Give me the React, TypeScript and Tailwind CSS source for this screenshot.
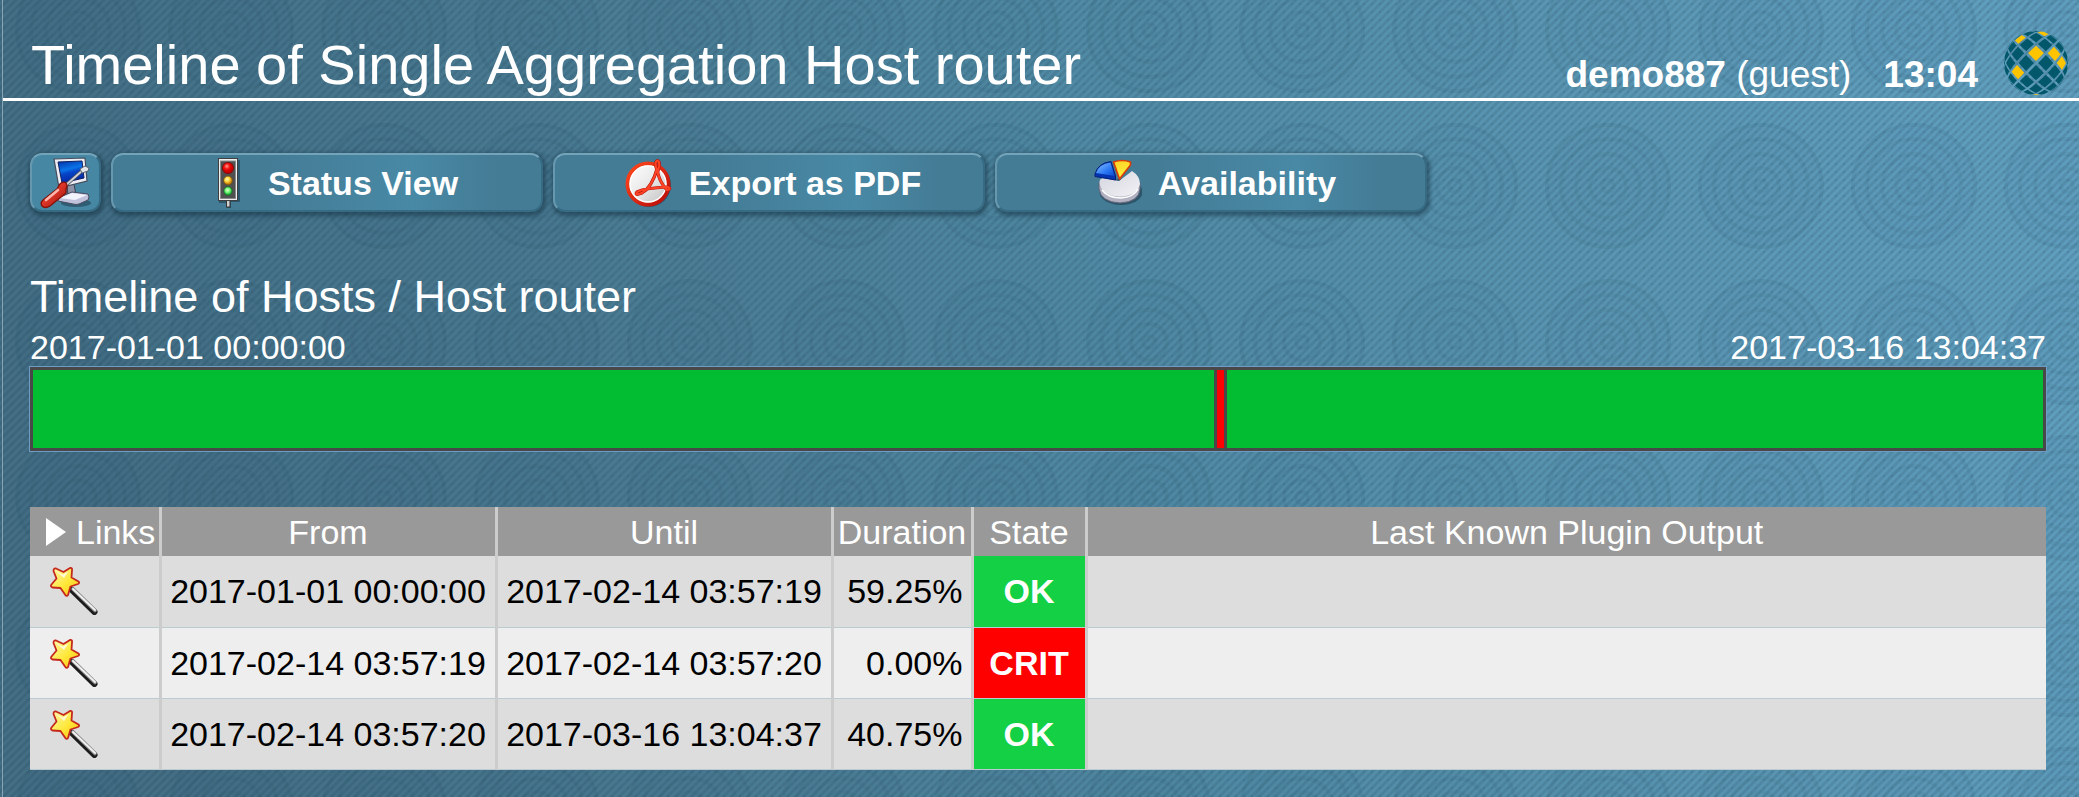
import React from "react";

type State = "OK" | "CRIT";

interface Entry {
  from: string;
  until: string;
  duration: string;
  state: State;
  output: string;
}

const entries: Entry[] = [
  { from: "2017-01-01 00:00:00", until: "2017-02-14 03:57:19", duration: "59.25%", state: "OK", output: "" },
  { from: "2017-02-14 03:57:19", until: "2017-02-14 03:57:20", duration: "0.00%", state: "CRIT", output: "" },
  { from: "2017-02-14 03:57:20", until: "2017-03-16 13:04:37", duration: "40.75%", state: "OK", output: "" },
];

const stateColors: Record<State, string> = {
  OK: "bg-[#13d044]",
  CRIT: "bg-[#ff0000]",
};

function Backdrop() {
  return (
    <svg className="absolute inset-0 h-full w-full" aria-hidden="true">
      <defs>
        <linearGradient id="base" x1="0" y1="0.1" x2="1" y2="0">
          <stop offset="0" stopColor="#436e84" />
          <stop offset="0.25" stopColor="#497a91" />
          <stop offset="0.5" stopColor="#5089a3" />
          <stop offset="0.75" stopColor="#5a96b2" />
          <stop offset="1" stopColor="#61a0c0" />
        </linearGradient>
        <pattern id="twill" width="8" height="8" patternUnits="userSpaceOnUse">
          <path d="M-2 2 L2 -2 M-2 10 L10 -2 M6 10 L10 6" stroke="#12384e" strokeOpacity="0.14" strokeWidth="2.8" />
          <circle cx="4" cy="4" r="1" fill="#12384e" fillOpacity="0.14" />
        </pattern>
        <pattern id="rings" x="2" y="110" width="153" height="156" patternUnits="userSpaceOnUse">
          <g fill="none" stroke="#123448" strokeOpacity="0.06" strokeWidth="4">
            <circle cx="76" cy="76" r="6" />
            <circle cx="76" cy="76" r="18" />
            <circle cx="76" cy="76" r="32" />
            <circle cx="76" cy="76" r="47" />
            <circle cx="76" cy="76" r="61" />
          </g>
          <circle cx="76" cy="76" r="63" fill="#123448" fillOpacity="0.025" />
        </pattern>
      </defs>
      <rect width="100%" height="100%" fill="url(#base)" />
      <rect width="100%" height="100%" fill="url(#rings)" />
      <rect width="100%" height="100%" fill="url(#twill)" />
    </svg>
  );
}

const GLOBE_STEP = 0.318;
const goldCells = new Set(["0,-1", "-2,1", "2,-1", "3,0", "-2,-3", "1,-4", "0,5"]);

function project(i: number, j: number): string {
  const r = Math.hypot(i, j);
  if (r === 0) return "0,0";
  const d = Math.sin(Math.min(r * GLOBE_STEP, Math.PI / 2)) * 32;
  return `${((i / r) * d).toFixed(2)},${((j / r) * d).toFixed(2)}`;
}

function GlobeLogo() {
  const cells: React.ReactNode[] = [];
  const half = 0.8;
  for (let i = -5; i <= 5; i++) {
    for (let j = -5; j <= 5; j++) {
      if ((i + j) % 2 === 0 || Math.hypot(i, j) > 5.3) continue;
      const corners = [[half, 0], [0, half], [-half, 0], [0, -half]];
      const points: string[] = [];
      corners.forEach(([x, y], n) => {
        const [nx, ny] = corners[(n + 1) % 4];
        for (let t = 0; t < 4; t++) {
          points.push(project(i + x + ((nx - x) * t) / 4, j + y + ((ny - y) * t) / 4));
        }
      });
      const key = `${i},${j}`;
      cells.push(<polygon key={key} points={points.join(" ")} fill={goldCells.has(key) ? "#ffc400" : "#02586a"} />);
    }
  }
  return (
    <svg viewBox="-32 -32 64 64" className="size-16" role="img" aria-label="Logo">
      {cells}
    </svg>
  );
}

function ToolsIcon() {
  return (
    <svg viewBox="0 0 52 52" className="size-13" aria-hidden="true">
      <defs>
        <linearGradient id="screen" x1="0" y1="0" x2="0.3" y2="1">
          <stop offset="0" stopColor="#0430a8" />
          <stop offset="0.45" stopColor="#0a74e8" />
          <stop offset="0.6" stopColor="#0646c8" />
          <stop offset="1" stopColor="#0326a4" />
        </linearGradient>
        <linearGradient id="grip" x1="0" y1="0" x2="1" y2="1">
          <stop offset="0" stopColor="#ffa092" />
          <stop offset="0.4" stopColor="#e23a2c" />
          <stop offset="1" stopColor="#9c0e08" />
        </linearGradient>
      </defs>
      <ellipse cx="36" cy="46" rx="15" ry="4" fill="#1d3b4c" fillOpacity="0.55" />
      <path d="M27 28 L34 27 L36 38 L28 38 Z" fill="#8f93a8" stroke="#3c4252" />
      <path d="M18 41 L32 35 L48 37 Q50 40 48 43 L39 47 Q36 48 33 47 L18 44 Z" fill="#c0c2dc" stroke="#474c60" />
      <path d="M20 41 L32 36 L47 38 L35 43 Z" fill="#f3f3fc" />
      <path d="M14 2 L45 1 L47 24 L19 31 Z" fill="#ececf4" stroke="#474c5c" strokeWidth="1.2" />
      <path d="M18 5 L42 4 L44 21 L22 26 Z" fill="url(#screen)" stroke="#10205c" />
      <path d="M26 28 L43 13" stroke="#4b4f58" strokeWidth="3.6" strokeLinecap="round" />
      <path d="M26 28 L43 13" stroke="#c9cdd6" strokeWidth="2" strokeLinecap="round" />
      <path d="M40 12 L45 9 L49 11 L48 14 L42 16 Z" fill="#dfe3ea" stroke="#5c626e" />
      <path d="M20 27 Q23 24 26 26 Q28 29 26 32 L26 36 L10 49 Q5 52 2 49 Q0 46 3 43 L17 32 Z" fill="url(#grip)" stroke="#861008" strokeWidth="1.3" />
      <path d="M6 43 L18 33" stroke="#ffc4ba" strokeWidth="2.6" strokeLinecap="round" strokeOpacity="0.9" />
    </svg>
  );
}

function TrafficLightIcon() {
  return (
    <svg viewBox="0 0 48 50" className="h-[50px] w-12" aria-hidden="true">
      <defs>
        <radialGradient id="lampRed" cx="0.4" cy="0.35">
          <stop offset="0" stopColor="#ff9d8c" /><stop offset="0.5" stopColor="#f31111" /><stop offset="1" stopColor="#c40000" />
        </radialGradient>
        <radialGradient id="lampYellow" cx="0.4" cy="0.35">
          <stop offset="0" stopColor="#fff8b0" /><stop offset="0.6" stopColor="#f8d23a" /><stop offset="1" stopColor="#cf8a10" />
        </radialGradient>
        <radialGradient id="lampGreen" cx="0.45" cy="0.4">
          <stop offset="0" stopColor="#d8ffd0" /><stop offset="0.6" stopColor="#6ef272" /><stop offset="1" stopColor="#22b63a" />
        </radialGradient>
      </defs>
      <path d="M15 2 H36 V44 H27 V50 H23 V45 H15 Z" fill="#102c3a" fillOpacity="0.45" />
      <rect x="22.5" y="42" width="3.5" height="7" fill="#d0d0d0" stroke="#333" strokeWidth="1" />
      <rect x="14.5" y="0.5" width="19" height="42" fill="#efefef" stroke="#3f3f3f" />
      <rect x="16.5" y="3" width="15" height="37.5" fill="#505050" stroke="#8b8b8b" />
      <circle cx="24" cy="10" r="5.6" fill="url(#lampRed)" stroke="#7c0808" strokeWidth="0.8" />
      <circle cx="24" cy="22.5" r="4.4" fill="url(#lampYellow)" stroke="#6e4d0c" strokeWidth="0.8" />
      <circle cx="24" cy="33" r="4.2" fill="url(#lampGreen)" stroke="#176a24" strokeWidth="0.8" />
    </svg>
  );
}

function PdfIcon() {
  return (
    <svg viewBox="0 0 48 50" className="h-[50px] w-12" aria-hidden="true">
      <defs>
        <linearGradient id="disc" x1="0" y1="0" x2="1" y2="1">
          <stop offset="0" stopColor="#ffffff" /><stop offset="0.5" stopColor="#e9e9e9" /><stop offset="1" stopColor="#bdbdbd" />
        </linearGradient>
        <linearGradient id="rim" x1="0" y1="0" x2="1" y2="1">
          <stop offset="0" stopColor="#ff4a1c" /><stop offset="1" stopColor="#b80a0a" />
        </linearGradient>
      </defs>
      <circle cx="24" cy="27" r="22" fill="#14303e" fillOpacity="0.5" />
      <circle cx="23" cy="26" r="20.5" fill="url(#disc)" stroke="url(#rim)" strokeWidth="4" />
      <circle cx="23" cy="26" r="18" fill="none" stroke="#fff" strokeWidth="1.4" />
      <g fill="none" strokeLinecap="round" strokeLinejoin="round">
        <path d="M34 4 Q32 1 30.5 5 Q30 9 33 13 Q35 8 34 4 M32 11 Q27 29 17 35 Q9 38 12 34 Q19 30 43 29 Q47 31 42 32 Q34 24 32 11" stroke="#b81b0c" strokeWidth="3.2" />
        <path d="M34 4 Q32 1 30.5 5 Q30 9 33 13 Q35 8 34 4 M32 11 Q27 29 17 35 Q9 38 12 34 Q19 30 43 29 Q47 31 42 32 Q34 24 32 11" stroke="#ff4326" strokeWidth="2" />
      </g>
    </svg>
  );
}

function PieIcon() {
  return (
    <svg viewBox="0 0 48 50" className="h-[50px] w-12" aria-hidden="true">
      <defs>
        <linearGradient id="plate" x1="0" y1="0" x2="1" y2="1">
          <stop offset="0" stopColor="#d4d4de" /><stop offset="1" stopColor="#f2f2f6" />
        </linearGradient>
        <linearGradient id="blueSlice" x1="0" y1="0" x2="1" y2="1">
          <stop offset="0" stopColor="#8cc4ff" /><stop offset="0.6" stopColor="#2a78f4" /><stop offset="1" stopColor="#0a48d0" />
        </linearGradient>
        <linearGradient id="goldSlice" x1="0" y1="0" x2="0.3" y2="1">
          <stop offset="0" stopColor="#ffd024" /><stop offset="1" stopColor="#fff03c" />
        </linearGradient>
      </defs>
      <ellipse cx="27" cy="34" rx="21.5" ry="13" fill="#14303e" fillOpacity="0.5" />
      <path d="M5 25 V31 Q7 44 26 45 Q45 44 46 31 V25 Z" fill="#b2b2c2" stroke="#64647a" />
      <path d="M5.5 25 Q5 21 9 20 L25 23 L38 13 Q46 18 46 26 Q43 38 26 38.5 Q8 38 5.5 25 Z" fill="url(#plate)" />
      <path d="M8 32 Q14 40 27 40 Q40 39 44 31" fill="none" stroke="#fff" strokeWidth="1.5" />
      <path d="M1 16 Q4 5 17 3.5 L21.5 18 V22 L1 18.5 Z" fill="#0634b0" stroke="#04207c" />
      <path d="M2 15 Q5 6 16.5 4.5 L20.5 18 Z" fill="url(#blueSlice)" />
      <path d="M19.5 4 Q28 1 36.5 4 V7 L25.5 21 Z" fill="url(#goldSlice)" stroke="#d83c08" strokeWidth="1.6" strokeLinejoin="round" />
    </svg>
  );
}

function WandIcon() {
  return (
    <svg viewBox="0 0 48 48" className="size-12" aria-hidden="true">
      <defs>
        <linearGradient id="star" x1="0" y1="0" x2="1" y2="1">
          <stop offset="0" stopColor="#fff6b0" /><stop offset="0.55" stopColor="#ffe838" /><stop offset="1" stopColor="#ffb818" />
        </linearGradient>
      </defs>
      <path d="M22 23 L44.5 45" stroke="#1c1c1c" strokeWidth="6" strokeLinecap="round" />
      <path d="M23 22 L45 43.5" stroke="#8d8d8d" strokeWidth="3.6" strokeLinecap="round" />
      <path d="M23 22 L45 43" stroke="#f0f0f0" strokeWidth="2" strokeLinecap="round" />
      <path
        d="M6 1.5 L13.5 5 L20 1 Q22.5 0.500 22 3.5 L21.5 10.5 L28.500 14.500 Q30 16 28 17 L20.5 19.5 L18 28 Q16.5 30 15 27.5 L10.5 21 L2.5 20.500 Q0 19.5 1.5 17.5 L6.500 11.5 L3.5 4 Q3.5 1 6 1.5 Z"
        fill="url(#star)"
        stroke="#c4281c"
        strokeWidth="1.8"
        strokeLinejoin="round"
      />
      <path d="M6 4 L12.5 7.5 L18.5 4.5 L14 11 Z" fill="#fff" fillOpacity="0.7" />
    </svg>
  );
}

const bevel =
  "rounded-xl border-2 border-t-[#74a4ba] border-l-[#6699b0] border-b-[#376b84] border-r-[#376b84] shadow-[1px_2px_4px_2px_rgba(20,50,66,0.55)]";

function ContextButton({ icon, label }: { icon: React.ReactNode; label: string }) {
  return (
    <a
      href="#"
      className={`${bevel} flex h-[59px] w-[432px] items-center justify-center gap-4 bg-[#447b95] bg-linear-to-r from-[#447b95] from-35% via-[#4889a5] via-70% to-[#447b95] to-90% pl-2 text-[34px] leading-[40px] font-bold`}
    >
      {icon}
      {label}
    </a>
  );
}

const headCell = "border-r-3 border-[#cccccc] p-0 text-center font-normal";
const bodyCell = "border-r-3 border-[#cccccc] px-2";

export default function App() {
  return (
    <div className="relative min-h-screen bg-[#4c8199] font-['Liberation_Sans',Arial,sans-serif] text-white">
      <Backdrop />
      <div className="relative ml-0.5 min-h-screen border-l border-[#87a5b3]">
        <header className="flex items-end border-b-3 border-white pt-[31px] pr-[11px] pb-[3px] pl-7">
          <h1 className="flex-1 text-[56px] leading-[60px]">Timeline of Single Aggregation Host router</h1>
          <div className="mr-[26px] flex gap-8 text-[37px] leading-[40px]">
            <span>
              <b>demo887</b> (guest)
            </span>
            <b>13:04</b>
          </div>
          <GlobeLogo />
        </header>

        <main className="pt-[52px] pr-[33px] pb-7 pl-[27px]">
          <nav className="flex flex-wrap gap-2.5">
            <a href="#" aria-label="Edit view" className={`${bevel} flex h-[59px] w-[71px] items-center justify-center bg-[#4687a3]`}>
              <ToolsIcon />
            </a>
            <ContextButton icon={<TrafficLightIcon />} label="Status View" />
            <ContextButton icon={<PdfIcon />} label="Export as PDF" />
            <ContextButton icon={<PieIcon />} label="Availability" />
          </nav>

          <h2 className="mt-[59px] text-[45px] leading-[52px]">Timeline of Hosts / Host router</h2>
          <div className="mt-1 flex justify-between text-[34px] leading-[40px]">
            <span>2017-01-01 00:00:00</span>
            <span>2017-03-16 13:04:37</span>
          </div>
          <div className="flex h-[84px] divide-x-3 divide-[#484848] border-3 border-[#484848] outline outline-[#6f9cc4]">
            <div className="grow-5930 basis-0 bg-[#02bd32]" />
            <div className="w-[10px] bg-[#ff0000]" />
            <div className="grow-4095 basis-0 bg-[#02bd32]" />
          </div>

          <table className="mt-14 w-full table-fixed border-collapse text-[34px] leading-[40px]">
            <colgroup>
              <col className="w-[130px]" />
              <col className="w-[336px]" />
              <col className="w-[336px]" />
              <col className="w-[140px]" />
              <col className="w-[114px]" />
              <col />
            </colgroup>
            <thead>
              <tr className="h-[49px] bg-[#999999]">
                <th className={headCell}>
                  <button type="button" className="flex w-full items-center gap-2.5 pl-4">
                    <svg viewBox="0 0 20 28" className="h-7 w-5" aria-hidden="true">
                      <path d="M0 0 L20 14 L0 28 Z" fill="#fff" />
                    </svg>
                    Links
                  </button>
                </th>
                <th className={headCell}>From</th>
                <th className={headCell}>Until</th>
                <th className={headCell}>Duration</th>
                <th className={headCell}>State</th>
                <th className="p-0 font-normal">Last Known Plugin Output</th>
              </tr>
            </thead>
            <tbody className="text-black">
              {entries.map((e) => (
                <tr key={e.from} className="h-[71px] border-b border-b-[#bccbd2] odd:bg-[#dddddd] even:bg-[#eeeeee]">
                  <td className="border-r-3 border-[#cccccc] py-0 pl-5">
                    <a href="#" aria-label="Timeline details" className="block w-12">
                      <WandIcon />
                    </a>
                  </td>
                  <td className={`${bodyCell} text-center`}>{e.from}</td>
                  <td className={`${bodyCell} text-center`}>{e.until}</td>
                  <td className={`${bodyCell} text-right`}>{e.duration}</td>
                  <td className={`${stateColors[e.state]} border-r-3 border-r-[#cccccc] p-0 text-center font-bold text-white`}>
                    {e.state}
                  </td>
                  <td>{e.output}</td>
                </tr>
              ))}
            </tbody>
          </table>
        </main>
      </div>
    </div>
  );
}
